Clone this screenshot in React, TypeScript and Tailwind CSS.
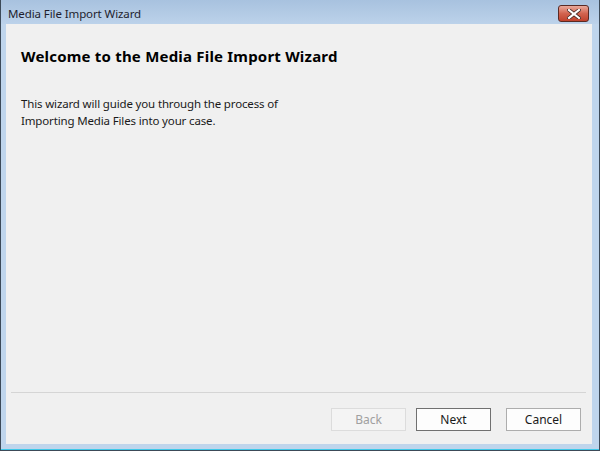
export default function App() {
    return (
        <div
            className="w-[600px] h-[451px] flex flex-col bg-[#bfd5ec] border-l border-b border-r border-[#3c4a58] overflow-hidden"
            style={{ fontFamily: '"Noto Sans", "Liberation Sans", sans-serif' }}
        >
            {/* Title bar */}
            <div className="h-[24px] flex items-center justify-between pl-[7px] pr-[10px] bg-gradient-to-b from-[#a8c2df] to-[#bcd2ea]">
                <span className="mt-[3px] text-[11.5px] tracking-[-0.1px] text-[#1e1e2e] leading-none">
                    Media File Import Wizard
                </span>
                <div className="w-[31px] h-[17px] mt-[3px] rounded-[3px] border border-[#5a2a24] bg-gradient-to-b from-[#e9a99c] via-[#d2644f] to-[#c0412c] flex items-center justify-center">
                    <svg width="14" height="10" viewBox="0 0 14 10">
                        <path
                            d="M2 1 L12 9 M12 1 L2 9"
                            stroke="#3d2420"
                            strokeWidth="3.6"
                            strokeLinecap="square"
                            fill="none"
                        />
                        <path
                            d="M2 1 L12 9 M12 1 L2 9"
                            stroke="#ffffff"
                            strokeWidth="2.2"
                            strokeLinecap="square"
                            fill="none"
                        />
                    </svg>
                </div>
            </div>

            {/* Client area */}
            <div className="flex-1 flex pl-[5px] pr-[6px] pb-[5px]">
                <div className="flex-1 flex flex-col bg-[#f0f0f0]">
                    <div className="flex-1 pl-[15px] pt-[21px]">
                        <h1 className="text-[15px] tracking-[0.2px] font-bold text-black leading-[22px]">
                            Welcome to the Media File Import Wizard
                        </h1>
                        <p className="mt-[28px] text-[11.5px] tracking-[-0.15px] text-[#1a1a1a] leading-[17px]">
                            This wizard will guide you through the process of
                            <br />
                            Importing Media Files into your case.
                        </p>
                    </div>

                    {/* Separator */}
                    <div className="ml-[5px] mr-[6px] h-px bg-[#d5d5d5]" />

                    {/* Buttons */}
                    <div className="h-[51px] flex justify-end items-start pt-[15px] pr-[11px] gap-[10px] text-[12px]">
                        <button
                            disabled
                            className="w-[75px] h-[23px] border border-[#dcdcdc] bg-[#f4f4f4] text-[#a0a0a0]"
                        >
                            Back
                        </button>
                        <button className="w-[75px] h-[23px] border border-[#707070] bg-[#fdfdfd] text-[#1a1a1a]">
                            Next
                        </button>
                        <button className="ml-[5px] w-[75px] h-[23px] border border-[#adadad] bg-[#fdfdfd] text-[#1a1a1a]">
                            Cancel
                        </button>
                    </div>
                </div>
                <div className="w-px" />
            </div>
            <div className="h-px bg-[#3ec8e8]" />
        </div>
    );
}
